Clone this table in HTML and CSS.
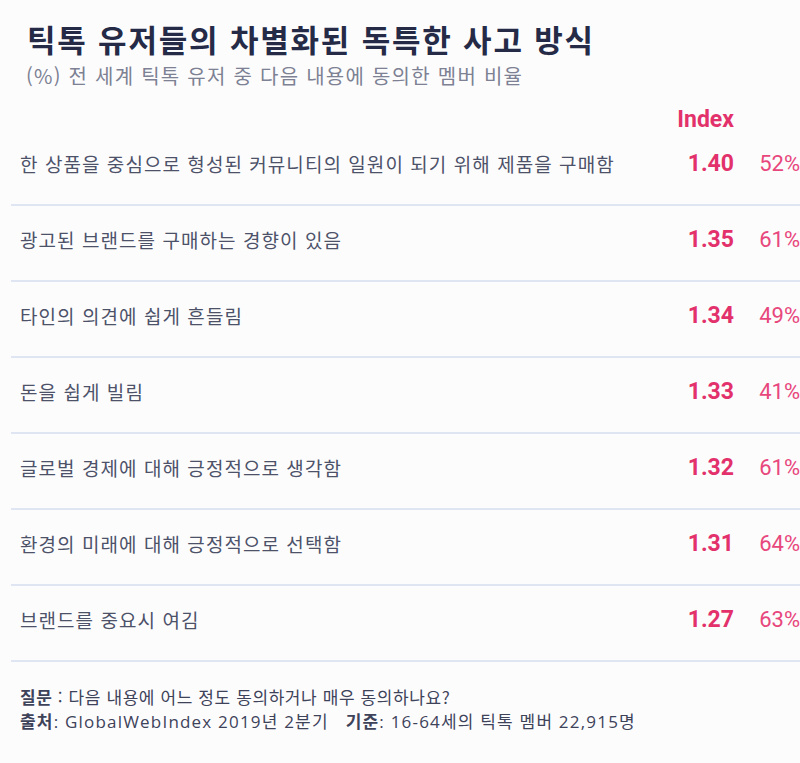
FILE: index.html
```html
<!DOCTYPE html>
<html lang="ko">
<head>
<meta charset="utf-8">
<link rel="stylesheet" href="styles.css">
</head>
<body>
<div class="page">
  <header class="head">
    <h1 class="title">틱톡 유저들의 차별화된 독특한 사고 방식</h1>
    <p class="subtitle">(%) 전 세계 틱톡 유저 중 다음 내용에 동의한 멤버 비율</p>
  </header>
  <div class="table">
    <div class="colhead"><span class="ch-index">Index</span><span class="ch-pct"></span></div>
    <div class="row"><span class="label">한 상품을 중심으로 형성된 커뮤니티의 일원이 되기 위해 제품을 구매함</span><span class="idx">1.40</span><span class="pct">52%</span></div>
    <div class="row"><span class="label">광고된 브랜드를 구매하는 경향이 있음</span><span class="idx">1.35</span><span class="pct">61%</span></div>
    <div class="row"><span class="label">타인의 의견에 쉽게 흔들림</span><span class="idx">1.34</span><span class="pct">49%</span></div>
    <div class="row"><span class="label">돈을 쉽게 빌림</span><span class="idx">1.33</span><span class="pct">41%</span></div>
    <div class="row"><span class="label">글로벌 경제에 대해 긍정적으로 생각함</span><span class="idx">1.32</span><span class="pct">61%</span></div>
    <div class="row"><span class="label">환경의 미래에 대해 긍정적으로 선택함</span><span class="idx">1.31</span><span class="pct">64%</span></div>
    <div class="row"><span class="label">브랜드를 중요시 여김</span><span class="idx">1.27</span><span class="pct">63%</span></div>
  </div>
  <footer class="foot">
    <p class="fline q"><b>질문</b> : 다음 내용에 어느 정도 동의하거나 매우 동의하나요?</p>
    <p class="fline src"><b>출처</b>: GlobalWebIndex 2019년 2분기 &nbsp; <b>기준</b>: 16-64세의 틱톡 멤버 22,915명</p>
  </footer>
</div>
</body>
</html>
```

FILE: styles.css
```css
* { box-sizing: border-box; }
html, body {
  margin: 0;
  padding: 0;
  background: #fafafc;
}
body {
  font-family: "Noto Sans CJK KR", "Noto Sans", sans-serif;
  color: #4d5269;
}
.page {
  width: 800px;
  height: 763px;
  padding-left: 11px;
  background: #fcfcfd;
}
.head {
  padding: 21px 0 0 16px;
}
.title {
  margin: 0;
  font-size: 31px;
  line-height: 36px;
  font-weight: 700;
  color: #252b47;
  letter-spacing: 1.8px;
}
.subtitle {
  margin: 7px 0 0 -1px;
  font-size: 20px;
  line-height: 24px;
  font-weight: 400;
  color: #7d8193;
  letter-spacing: 1.25px;
}
.table {
  margin-top: 22px;
}
.colhead {
  display: flex;
  justify-content: flex-end;
  height: 20px;
  line-height: 20px;
}
.ch-index {
  font-family: Roboto, "Noto Sans", sans-serif;
  font-weight: 700;
  font-size: 23px;
  color: #e2316b;
}
.ch-pct { width: 66px; }
.row {
  display: flex;
  align-items: center;
  height: 76px;
  padding: 0 0 8px 9px;
  border-bottom: 2px solid #dfe5f2;
}
.label {
  flex: 1;
  font-size: 19px;
  color: #4d5269;
  letter-spacing: 1.05px;
}
.idx {
  font-family: Roboto, "Noto Sans", sans-serif;
  font-weight: 700;
  font-size: 23px;
  color: #e2316b;
  text-align: right;
}
.pct {
  width: 66px;
  text-align: right;
  font-family: Roboto, "Noto Sans", sans-serif;
  font-weight: 400;
  font-size: 22px;
  color: #e8477c;
}
.foot {
  padding: 23px 0 0 9px;
}
.fline {
  margin: 0;
  font-size: 17px;
  line-height: 24px;
  color: #3e435a;
}
.q { letter-spacing: 0.6px; }
.src {
  font-family: "Open Sans", "Noto Sans CJK KR", sans-serif;
  letter-spacing: 1.2px;
}
.fline b { font-weight: 700; font-family: "Noto Sans CJK KR", sans-serif; }
```
